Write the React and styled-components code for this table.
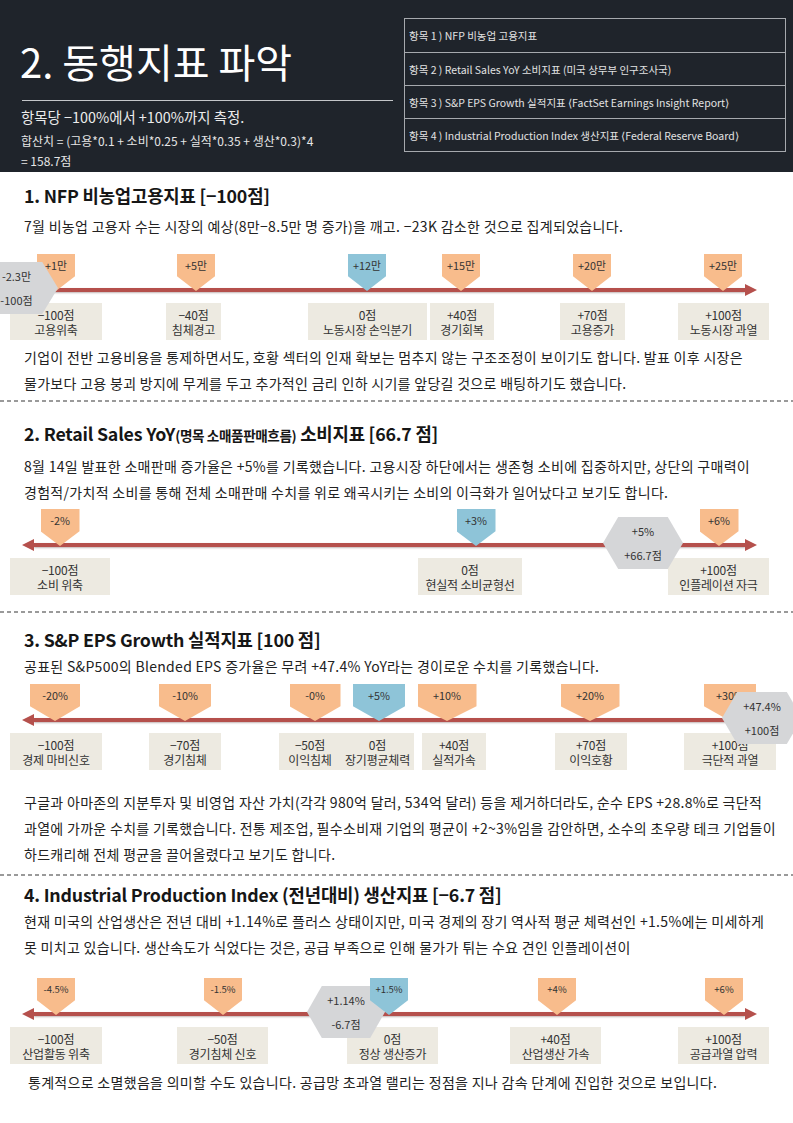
import React from 'react';
import styled, { createGlobalStyle } from 'styled-components';

const GlobalStyle = createGlobalStyle`
  html, body {
    margin: 0;
    padding: 0;
    background: #ffffff;
  }
  body {
    font-family: "Noto Sans CJK KR", "Noto Sans", sans-serif;
    color: #262626;
  }
`;

const Page = styled.div`
  width: 793px;
  overflow: hidden;
`;

/* header */
const Header = styled.header`
  display: flex;
  height: 172px;
  background: #1f242b;
  color: #ffffff;
`;

const HeaderLeft = styled.div`
  width: 384px;
  padding: 36px 0 0 20px;
`;

const BigTitle = styled.h1`
  margin: 0;
  font-size: 40px;
  line-height: 50px;
  font-weight: 400;
  letter-spacing: 0;
`;

const Rule = styled.div`
  width: 371px;
  height: 1px;
  margin: 14px 0 0 2px;
  background: #c4c6c9;
`;

const Measure = styled.div`
  margin: 6px 0 0 1px;
  font-size: 14.4px;
  line-height: 20px;
  color: #ececec;
`;

const Formula = styled.div`
  margin: 4px 0 0 1px;
  font-size: 12px;
  line-height: 20px;
  color: #e6e6e6;
`;

const ItemTable = styled.div`
  width: 382px;
  height: 134px;
  margin-top: 18px;
  display: grid;
  grid-template-rows: repeat(4, 1fr);
  border: 1px solid #a6a9ae;
  box-sizing: border-box;
`;

const ItemRow = styled.div`
  display: flex;
  align-items: center;
  padding-left: 4px;
  font-size: 10.5px;
  color: #e2e2e2;
  white-space: nowrap;
  border-top: ${(p) => (p.$first ? 'none' : '1px solid #a6a9ae')};
`;

/* sections */
const Section = styled.section`
  padding: ${(p) => p.$pt}px 0 ${(p) => p.$pb}px;
  position: relative;
`;

const Divider = styled.div`
  height: 2px;
  background: repeating-linear-gradient(to right, #9a9a9a 0 4px, transparent 4px 7px);
`;

const Title = styled.h2`
  margin: 0 0 0 24px;
  font-size: 17.8px;
  line-height: 24px;
  font-weight: 700;
  color: #161616;
  letter-spacing: -0.2px;
  white-space: nowrap;
`;

const TitleSmall = styled.span`
  font-size: 13.6px;
  letter-spacing: -0.4px;
`;

const Para = styled.p`
  margin: ${(p) => p.$mt || 0}px 0 0 ${(p) => (p.$indent ? 28 : 24)}px;
  font-size: 14px;
  line-height: 26px;
  color: #222222;
  letter-spacing: 0.3px;
  white-space: nowrap;
`;

/* timeline chart */
const Timeline = styled.div`
  position: relative;
  height: 86px;
  margin-top: ${(p) => p.$mt}px;
  overflow: hidden;
`;

const Axis = styled.div`
  position: absolute;
  top: 34px;
  left: 34px;
  right: 48px;
  height: 4px;
  background: #b5504c;
  box-shadow: 0 1px 2px rgba(80, 40, 40, 0.35);

  &::before,
  &::after {
    content: '';
    position: absolute;
    top: -4px;
    border-top: 6px solid transparent;
    border-bottom: 6px solid transparent;
  }
  &::before {
    left: -12px;
    border-right: 12px solid #b5504c;
  }
  &::after {
    right: -12px;
    border-left: 12px solid #b5504c;
  }
`;

const Badge = styled.div`
  position: absolute;
  top: 0;
  left: ${(p) => p.$x - p.$w / 2}px;
  width: ${(p) => p.$w}px;
  height: 37px;
  background: ${(p) => (p.$blue ? '#8ec4d8' : '#f8bc8c')};
  clip-path: polygon(0 0, 100% 0, 100% 60%, 50% 100%, 0 60%);
  z-index: ${(p) => (p.$front ? 4 : 2)};
  text-align: center;
  font-size: ${(p) => (p.$small ? 9.5 : 10.8)}px;
  line-height: 23px;
  color: #333333;
`;

const Label = styled.div`
  position: absolute;
  top: 49px;
  left: ${(p) => p.$l}px;
  width: ${(p) => p.$r - p.$l}px;
  height: 37px;
  background: #edeae1;
  z-index: 1;
  display: flex;
  flex-direction: column;
  justify-content: center;
  align-items: center;
  font-size: 12px;
  line-height: 15px;
  color: #333333;
  letter-spacing: -0.2px;
  white-space: nowrap;
`;

const Hex = styled.div`
  position: absolute;
  top: 8px;
  left: ${(p) => p.$l}px;
  width: ${(p) => p.$w}px;
  height: 52px;
  background: #d5d6d8;
  clip-path: polygon(19% 0, 81% 0, 100% 50%, 81% 100%, 19% 100%, 0 50%);
  z-index: 3;
  display: flex;
  flex-direction: column;
  justify-content: center;
  align-items: center;
  font-size: 11px;
  line-height: 24px;
  color: #333333;
`;

const Chart = ({ mt, badges, labels, hex, small }) => (
  <Timeline $mt={mt}>
    <Axis />
    {labels.map((l) => (
      <Label key={l.a + l.b} $l={l.l} $r={l.r}>
        <span>{l.a}</span>
        <span>{l.b}</span>
      </Label>
    ))}
    {badges.map((b) => (
      <Badge key={b.t} $x={b.x} $w={b.w || 38} $blue={b.blue} $front={b.front} $small={small}>
        {b.t}
      </Badge>
    ))}
    <Hex $l={hex.l} $w={hex.w}>
      <span>{hex.a}</span>
      <span>{hex.b}</span>
    </Hex>
  </Timeline>
);

const nfp = {
  badges: [
    { x: 56, t: '+1만' },
    { x: 196, t: '+5만' },
    { x: 367, t: '+12만', blue: true },
    { x: 461, t: '+15만' },
    { x: 592, t: '+20만' },
    { x: 723, t: '+25만' },
  ],
  labels: [
    { l: 10, r: 102, a: '−100점', b: '고용위축' },
    { l: 166, r: 221, a: '−40점', b: '침체경고' },
    { l: 308, r: 427, a: '0점', b: '노동시장 손익분기' },
    { l: 430, r: 494, a: '+40점', b: '경기회복' },
    { l: 560, r: 625, a: '+70점', b: '고용증가' },
    { l: 678, r: 769, a: '+100점', b: '노동시장 과열' },
  ],
  hex: { l: -25, w: 83, a: '-2.3만', b: '-100점' },
};

const retail = {
  badges: [
    { x: 60, t: '-2%', w: 39 },
    { x: 476, t: '+3%', w: 39, blue: true },
    { x: 719, t: '+6%', w: 39 },
  ],
  labels: [
    { l: 10, r: 110, a: '−100점', b: '소비 위축' },
    { l: 418, r: 522, a: '0점', b: '현실적 소비균형선' },
    { l: 668, r: 769, a: '+100점', b: '인플레이션 자극' },
  ],
  hex: { l: 603, w: 80, a: '+5%', b: '+66.7점' },
};

const eps = {
  badges: [
    { x: 55, t: '-20%', w: 50 },
    { x: 185, t: '-10%', w: 52 },
    { x: 315, t: '-0%', w: 51 },
    { x: 379, t: '+5%', w: 52, blue: true },
    { x: 447, t: '+10%', w: 59 },
    { x: 590, t: '+20%', w: 59 },
    { x: 730, t: '+30%', w: 52 },
  ],
  labels: [
    { l: 10, r: 102, a: '−100점', b: '경제 마비신호' },
    { l: 149, r: 221, a: '−70점', b: '경기침체' },
    { l: 279, r: 341, a: '−50점', b: '이익침체' },
    { l: 341, r: 414, a: '0점', b: '장기평균체력' },
    { l: 422, r: 486, a: '+40점', b: '실적가속' },
    { l: 555, r: 627, a: '+70점', b: '이익호황' },
    { l: 684, r: 776, a: '+100점', b: '극단적 과열' },
  ],
  hex: { l: 722, w: 80, a: '+47.4%', b: '+100점' },
};

const ipi = {
  badges: [
    { x: 56, t: '-4.5%' },
    { x: 223, t: '-1.5%' },
    { x: 389, t: '+1.5%', blue: true, front: true },
    { x: 557, t: '+4%' },
    { x: 724, t: '+6%' },
  ],
  labels: [
    { l: 10, r: 102, a: '−100점', b: '산업활동 위축' },
    { l: 177, r: 268, a: '−50점', b: '경기침체 신호' },
    { l: 347, r: 438, a: '0점', b: '정상 생산증가' },
    { l: 510, r: 601, a: '+40점', b: '산업생산 가속' },
    { l: 678, r: 769, a: '+100점', b: '공급과열 압력' },
  ],
  hex: { l: 307, w: 78, a: '+1.14%', b: '-6.7점' },
};

const items = [
  '항목 1 ) NFP 비농업 고용지표',
  '항목 2 ) Retail Sales YoY 소비지표 (미국 상무부 인구조사국)',
  '항목 3 ) S&P EPS Growth 실적지표 ⟨FactSet Earnings Insight Report⟩',
  '항목 4 ) Industrial Production Index 생산지표 ⟨Federal Reserve Board⟩',
];

const App = () => (
  <Page>
    <GlobalStyle />
    <Header>
      <HeaderLeft>
        <BigTitle>2. 동행지표 파악</BigTitle>
        <Rule />
        <Measure>항목당 −100%에서 +100%까지 측정.</Measure>
        <Formula>
          합산치 = (고용*0.1 + 소비*0.25 + 실적*0.35 + 생산*0.3)*4
          <br />= 158.7점
        </Formula>
      </HeaderLeft>
      <ItemTable>
        {items.map((t, i) => (
          <ItemRow key={t} $first={i === 0}>{t}</ItemRow>
        ))}
      </ItemTable>
    </Header>

    <Section $pt={11} $pb={4}>
      <Title>1. NFP 비농업고용지표 [−100점]</Title>
      <Para $mt={6}>
        7월 비농업 고용자 수는 시장의 예상(8만−8.5만 명 증가)을 깨고. −23K 감소한 것으로 집계되었습니다.
      </Para>
      <Chart mt={15} {...nfp} />
      <Para $mt={4}>
        기업이 전반 고용비용을 통제하면서도, 호황 섹터의 인재 확보는 멈추지 않는 구조조정이 보이기도 합니다. 발표 이후 시장은
        <br />
        물가보다 고용 붕괴 방지에 무게를 두고 추가적인 금리 인하 시기를 앞당길 것으로 배팅하기도 했습니다.
      </Para>
    </Section>
    <Divider />

    <Section $pt={19} $pb={16}>
      <Title>
        2. Retail Sales YoY<TitleSmall>(명목 소매품판매흐름)</TitleSmall> 소비지표 [66.7 점]
      </Title>
      <Para $mt={6}>
        8월 14일 발표한 소매판매 증가율은 +5%를 기록했습니다. 고용시장 하단에서는 생존형 소비에 집중하지만, 상단의 구매력이
        <br />
        경험적/가치적 소비를 통해 전체 소매판매 수치를 위로 왜곡시키는 소비의 이극화가 일어났다고 보기도 합니다.
      </Para>
      <Chart mt={4} {...retail} />
    </Section>
    <Divider />

    <Section $pt={14} $pb={7}>
      <Title>3. S&amp;P EPS Growth 실적지표 [100 점]</Title>
      <Para $mt={2}>
        공표된 S&amp;P500의 Blended EPS 증가율은 무려 +47.4% YoY라는 경이로운 수치를 기록했습니다.
      </Para>
      <Chart mt={5} {...eps} />
      <Para $mt={19}>
        구글과 아마존의 지분투자 및 비영업 자산 가치(각각 980억 달러, 534억 달러) 등을 제거하더라도, 순수 EPS +28.8%로 극단적
        <br />
        과열에 가까운 수치를 기록했습니다. 전통 제조업, 필수소비재 기업의 평균이 +2~3%임을 감안하면, 소수의 초우량 테크 기업들이
        <br />
        하드캐리해 전체 평균을 끌어올렸다고 보기도 합니다.
      </Para>
    </Section>
    <Divider />

    <Section $pt={6} $pb={30}>
      <Title>4. Industrial Production Index (전년대비) 생산지표 [−6.7 점]</Title>
      <Para $mt={2}>
        현재 미국의 산업생산은 전년 대비 +1.14%로 플러스 상태이지만, 미국 경제의 장기 역사적 평균 체력선인 +1.5%에는 미세하게
        <br />
        못 미치고 있습니다. 생산속도가 식었다는 것은, 공급 부족으로 인해 물가가 튀는 수요 견인 인플레이션이
      </Para>
      <Chart mt={18} small {...ipi} />
      <Para $mt={5} $indent>
        통계적으로 소멸했음을 의미할 수도 있습니다. 공급망 초과열 랠리는 정점을 지나 감속 단계에 진입한 것으로 보입니다.
      </Para>
    </Section>
  </Page>
);

export default App;
